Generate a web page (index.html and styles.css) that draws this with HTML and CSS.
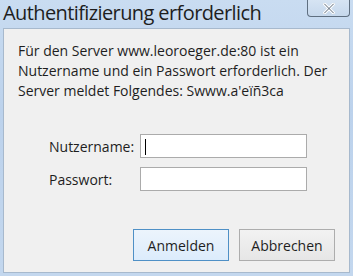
FILE: index.html
```html
<!DOCTYPE html>
<html lang="de">
<head>
    <meta charset="UTF-8">
    <meta name="viewport" content="width=device-width, initial-scale=1.0">
    <title>Authentifizierung erforderlich</title>
    <link rel="stylesheet" href="styles.css">
</head>
<body>
    <div class="window">
        <div class="titlebar">
            <div class="title">Authentifizierung erforderlich</div>
            <div class="close">
                <svg width="12" height="11" viewBox="0 0 12 11">
                    <path d="M1.5 1 L10.5 10 M10.5 1 L1.5 10" stroke="#ffffff" stroke-width="3" stroke-linecap="round"/>
                    <path d="M1.5 1 L10.5 10 M10.5 1 L1.5 10" stroke="#5a6878" stroke-width="1" stroke-linecap="round"/>
                </svg>
            </div>
        </div>

        <div class="panel">
            <p class="message">
                Für den Server www.leoroeger.de:80 ist ein
                Nutzername und ein Passwort erforderlich. Der
                Server meldet Folgendes: Swww.a'eïñ3ca
            </p>

            <div class="form">
                <label class="label" for="user">Nutzername:</label>
                <div class="input focused" id="user"><span class="caret"></span></div>
                <label class="label" for="pass">Passwort:</label>
                <div class="input" id="pass"></div>
            </div>

            <div class="buttons">
                <button class="btn btn-default">Anmelden</button>
                <button class="btn">Abbrechen</button>
            </div>
        </div>
    </div>
</body>
</html>
```

FILE: styles.css
```css
body {
    margin: 0;
    padding: 0;
    font-family: 'Open Sans', 'Noto Sans', sans-serif;
}
.window {
    width: 353px;
    height: 276px;
    box-sizing: border-box;
    background: linear-gradient(180deg, #c9dcf1 0%, #bcd2ec 40%, #c3d7ee 100%);
    padding: 0 3px 3px 3px;
    display: flex;
    flex-direction: column;
}
.titlebar {
    height: 28px;
    display: flex;
    justify-content: space-between;
    align-items: flex-start;
}
.title {
    font-size: 20px;
    letter-spacing: -0.6px;
    color: #1e1e1e;
    line-height: 26px;
}
.close {
    width: 43px;
    height: 17px;
    box-sizing: border-box;
    border: 1px solid #5f6f80;
    border-top: none;
    border-radius: 0 0 4px 4px;
    background: linear-gradient(180deg, #d6e4f3, #c6d8ec);
    display: flex;
    align-items: center;
    justify-content: center;
}
.panel {
    flex: 1;
    background: #f0f0f0;
    border: 1px solid #a7b9cd;
    padding: 12px 14px 11px 14px;
    display: flex;
    flex-direction: column;
}
.message {
    margin: 0;
    font-size: 14px;
    line-height: 20px;
    color: #1e1e1e;
}
.form {
    display: grid;
    grid-template-columns: 91px 167px;
    grid-auto-rows: 24px;
    row-gap: 9px;
    align-items: center;
    margin: 33px 0 0 31px;
}
.label {
    font-size: 14px;
    color: #1e1e1e;
}
.input {
    height: 24px;
    box-sizing: border-box;
    background: #ffffff;
    border: 1px solid #ababab;
    position: relative;
}
.caret {
    position: absolute;
    left: 4px;
    top: 4px;
    width: 1px;
    height: 16px;
    background: #000000;
}
.buttons {
    margin-top: auto;
    display: flex;
    justify-content: flex-end;
    gap: 10px;
}
.btn {
    width: 96px;
    height: 32px;
    font-family: 'Open Sans', 'Noto Sans', sans-serif;
    font-size: 14px;
    color: #1e1e1e;
    background: linear-gradient(180deg, #f2f2f2, #e6e6e6);
    border: 1px solid #adadad;
    padding: 0;
}
.btn-default {
    background: linear-gradient(180deg, #ecf4fc, #dcecfc);
    border-color: #4f90c6;
}
```
